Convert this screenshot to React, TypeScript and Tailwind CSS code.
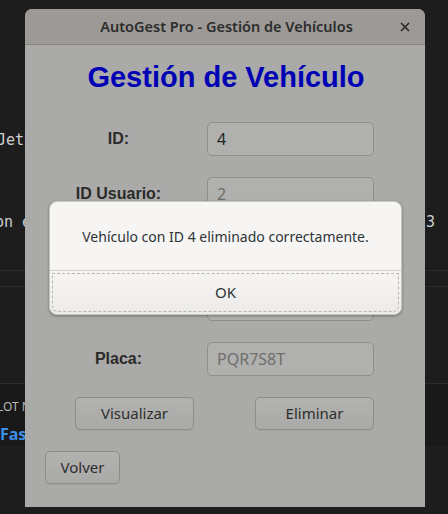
import { X } from 'lucide-react'

const gtk = { fontFamily: '"Noto Sans", "Open Sans", sans-serif' }
const arial = { fontFamily: '"Liberation Sans", Arial, sans-serif' }
const mono = { fontFamily: '"DejaVu Sans Mono", "Liberation Mono", monospace' }

function Field({ label, value, dim }: { label: string; value: string; dim?: boolean }) {
  return (
    <div className="flex items-center h-[34px]">
      <div className="w-[182px] pl-[5px] text-center text-[16px] font-bold text-[#2a2a2a]" style={arial}>
        {label}
      </div>
      <div
        className={`w-[167px] h-[34px] rounded-[5px] border border-[#8e8e8c] bg-[#b0b0ae] pl-[9px] flex items-center text-[16px] ${
          dim ? 'text-[#6e6e6c]' : 'text-[#252525]'
        }`}
        style={gtk}
      >
        {value}
      </div>
    </div>
  )
}

function Btn({ label, w }: { label: string; w: string }) {
  return (
    <button
      className={`${w} h-[33px] rounded-[5px] border border-[#8c8c8a] bg-gradient-to-b from-[#b2b2b0] to-[#a9a9a7] text-[15px] text-[#2e2e2e] shadow-[0_1px_0_rgba(0,0,0,0.06)]`}
      style={gtk}
    >
      {label}
    </button>
  )
}

export default function App() {
  return (
    <div className="relative w-[448px] h-[514px] overflow-hidden bg-[#1d1d1d]">
      {/* IDE behind */}
      <div className="flex flex-col text-[#cfcfcf]" style={mono}>
        <div className="h-[129px]" />
        <div className="h-[22px] text-[15px] leading-[22px] -ml-[3px]">JetB</div>
        <div className="h-[60px]" />
        <div className="h-[22px] text-[15px] leading-[22px] flex -ml-[5px]">
          <span>on e</span>
          <span className="ml-auto mr-[13px]">3</span>
        </div>
        <div className="h-[37px]" />
        <div className="h-[17px] border-y border-[#2b2b2b]" />
        <div className="h-[96px]" />
        <div className="h-px bg-[#2c2c2c]" />
        <div className="flex-1 bg-[#191919] pt-[14px]">
          <div className="text-[12px] text-[#b8b8b8] -ml-[3px]" style={gtk}>
            LOT N
          </div>
          <div className="mt-[6px] text-[16px] font-bold text-[#3d8ee6]" style={gtk}>
            Fase
          </div>
        </div>
      </div>

      {/* Application window */}
      <div className="absolute left-[25px] top-[9px] w-[400px] h-[498px] rounded-t-[7px] overflow-hidden bg-[#aaaaa8] flex flex-col">
        <div className="h-[36px] shrink-0 bg-[#9c9996] border-b border-[#868480] flex items-center justify-center relative">
          <span className="text-[14.5px] font-semibold text-[#2d2d2d] pl-[3px]" style={gtk}>
            AutoGest Pro - Gestión de Vehículos
          </span>
          <X className="absolute right-[13px] w-[14px] h-[14px] text-[#2d2d2d]" strokeWidth={3} />
        </div>

        <div className="flex flex-col">
          <h1 className="mt-[16px] h-[32px] text-center text-[29px] leading-[32px] font-bold text-[#0000b5] pl-[2px]" style={arial}>
            Gestión de Vehículo
          </h1>
          <div className="mt-[29px] flex flex-col gap-[21px]">
            <Field label="ID:" value="4" />
            <Field label="ID Usuario:" value="2" dim />
            <Field label="Marca:" value="Toyota" dim />
            <Field label="Modelo:" value="Corolla" dim />
            <Field label="Placa:" value="PQR7S8T" dim />
          </div>
          <div className="mt-[21px] flex pl-[50px] gap-[61px]">
            <Btn label="Visualizar" w="w-[119px]" />
            <Btn label="Eliminar" w="w-[119px]" />
          </div>
          <div className="mt-[21px] pl-[20px]">
            <Btn label="Volver" w="w-[75px]" />
          </div>
        </div>
      </div>

      {/* Message dialog */}
      <div className="absolute left-[49px] top-[201px] w-[353px] h-[114px] rounded-[8px] bg-[#f6f5f4] border border-[#c9c7c4] shadow-[0_1px_3px_rgba(0,0,0,0.35)] flex flex-col overflow-hidden">
        <div className="h-[68px] shrink-0 flex items-center justify-center text-[14px] text-[#2e3436]" style={gtk}>
          Vehículo con ID 4 eliminado correctamente.
        </div>
        <div className="h-px bg-[#d6d3cf]" />
        <div className="flex-1 p-[2px] bg-gradient-to-b from-[#f6f5f4] to-[#edebe9]">
          <div
            className="h-full rounded-b-[6px] border border-dashed border-[#b9b7b4] flex items-center justify-center text-[15px] text-[#2e3436]"
            style={gtk}
          >
            OK
          </div>
        </div>
      </div>
    </div>
  )
}
